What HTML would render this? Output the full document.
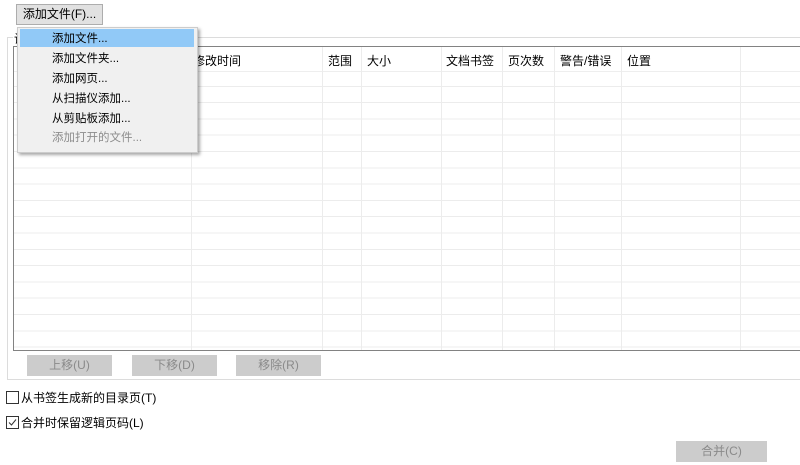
<!DOCTYPE html>
<html><head><meta charset="utf-8"><style>
body{margin:0;width:800px;height:465px;background:#fff;position:relative;overflow:hidden;font-family:"Liberation Sans","Noto Sans CJK SC",sans-serif;font-size:12px;color:#000}
.a{position:absolute}
.btn{position:absolute;background:#ccc;color:#8a8a8a;text-align:center;line-height:21px;height:21px;font-size:12px}
.mi{position:absolute;left:52px;font-size:11.5px}
.col{position:absolute;top:0;bottom:0;width:1px;background:#ececec}
.h{position:absolute;top:5px;font-size:12px}
</style></head><body>
<div class="a" style="left:7px;top:37px;width:800px;height:341px;border:1px solid #dcdcdc;"></div>
<div class="a" style="left:13px;top:30px;background:#fff;padding:0 1px">设置</div>
<div class="a" style="left:13px;top:46px;width:800px;height:303px;border:1px solid #828282;border-right:none;overflow:hidden;background:repeating-linear-gradient(#fff 0,#fff 15.3px,#ececec 15.3px,#ececec 16.3px);background-position:0 23.5px">
 <div class="a" style="left:0;top:0;width:800px;height:24px;background:#fff;border-bottom:1px solid #eee"></div>
 <div class="col" style="left:177px"></div><div class="col" style="left:308px"></div><div class="col" style="left:347px"></div><div class="col" style="left:427px"></div><div class="col" style="left:488px"></div><div class="col" style="left:540px"></div><div class="col" style="left:607px"></div><div class="col" style="left:726px"></div>
 <div class="h" style="left:179px">修改时间</div><div class="h" style="left:314px">范围</div><div class="h" style="left:353px">大小</div><div class="h" style="left:432px">文档书签</div><div class="h" style="left:494px">页次数</div><div class="h" style="left:546px">警告/错误</div><div class="h" style="left:613px">位置</div>
</div>
<div class="btn" style="left:27px;top:355px;width:85px">上移(U)</div>
<div class="btn" style="left:132px;top:355px;width:85px">下移(D)</div>
<div class="btn" style="left:236px;top:355px;width:85px">移除(R)</div>
<div class="a" style="left:6px;top:391px;width:11px;height:11px;border:1px solid #333"></div>
<div class="a" style="left:21px;top:389px">从书签生成新的目录页(T)</div>
<div class="a" style="left:6px;top:416px;width:11px;height:11px;border:1px solid #333"><svg width="11" height="11" style="position:absolute;left:0;top:0"><path d="M2 5.5 L4.5 8 L9 2.5" stroke="#333" fill="none" stroke-width="1"/></svg></div>
<div class="a" style="left:21px;top:414px">合并时保留逻辑页码(L)</div>
<div class="btn" style="left:676px;top:441px;width:91px">合并(C)</div>
<div class="a" style="left:16px;top:4px;width:85px;height:19px;background:#e1e1e1;border:1px solid #adadad;line-height:19px;text-align:center">添加文件(F)...</div>
<div class="a" style="left:17px;top:27px;width:179px;height:124px;background:#f0f0f0;border:1px solid #ccc;box-shadow:2px 2px 3px rgba(0,0,0,.35)"></div>
<div class="a" style="left:20px;top:29px;width:174px;height:18px;background:#91c9f7"></div>
<div class="mi" style="top:30px">添加文件...</div>
<div class="mi" style="top:50px">添加文件夹...</div>
<div class="mi" style="top:70px">添加网页...</div>
<div class="mi" style="top:90px">从扫描仪添加...</div>
<div class="mi" style="top:110px">从剪贴板添加...</div>
<div class="mi" style="top:129px;color:#8d8d8d">添加打开的文件...</div>
</body></html>
